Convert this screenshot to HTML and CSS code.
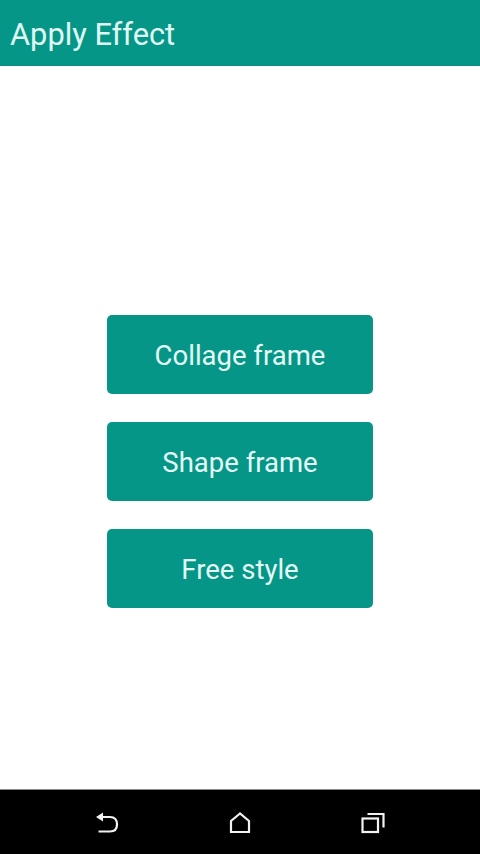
FILE: index.html
```html
<!DOCTYPE html>
<html lang="en">
<head>
    <meta charset="UTF-8">
    <meta name="viewport" content="width=device-width, initial-scale=1.0">
    <title>Apply Effect</title>
    <link rel="stylesheet" href="styles.css">
</head>
<body>
    <div class="screen">
        <div class="toolbar">Apply Effect</div>
        <div class="content">
            <a href="#" class="button">Collage frame</a>
            <a href="#" class="button">Shape frame</a>
            <a href="#" class="button">Free style</a>
        </div>
        <div class="navbar">
            <svg class="nav-icon" viewBox="0 0 28 24">
                <path d="M7 6H17C21.5 6 24 9 24 13.5S21.5 20.5 17 20.5H5.5"/>
                <path class="filled" d="M10 1.5V10.5L3 6Z"/>
            </svg>
            <svg class="nav-icon" viewBox="0 0 28 24">
                <path d="M14 2.5L5 10V21H23V10Z"/>
            </svg>
            <svg class="nav-icon" viewBox="0 0 28 24">
                <rect x="3.5" y="7.5" width="15.5" height="13.5"/>
                <path d="M8.5 3H24.5V16.5"/>
            </svg>
        </div>
    </div>
</body>
</html>
```
FILE: styles.css
```css
html, body {
    margin: 0;
    padding: 0;
}
body {
    font-family: Roboto, sans-serif;
    background-color: #fff;
}
.screen {
    width: 480px;
    height: 854px;
    display: flex;
    flex-direction: column;
    overflow: hidden;
}
.toolbar {
    height: 66px;
    padding-left: 10px;
    background-color: #059687;
    color: #e0f8f4;
    font-size: 30.8px;
    line-height: 69px;
    box-sizing: border-box;
    border-bottom: 1px solid #0b8c80;
}
.content {
    flex: 1;
    display: flex;
    flex-direction: column;
    align-items: center;
    gap: 27.4px;
    padding-top: 249px;
    box-sizing: border-box;
}
.button {
    width: 266px;
    height: 79.4px;
    padding-top: 2px;
    display: flex;
    justify-content: center;
    align-items: center;
    background-color: #059687;
    color: #e4f9f6;
    font-size: 27.5px;
    text-decoration: none;
    border-radius: 5px;
    box-sizing: border-box;
}
.navbar {
    height: 65px;
    padding-top: 1px;
    display: flex;
    justify-content: center;
    align-items: center;
    gap: 105px;
    background-color: #000;
    border-top: 1px solid #8a8a8a;
    box-sizing: border-box;
}
.nav-icon {
    width: 28px;
    height: 24px;
    fill: none;
    stroke: #f2f2f2;
    stroke-width: 2.2;
}
.nav-icon .filled {
    fill: #f2f2f2;
    stroke: none;
}
```
